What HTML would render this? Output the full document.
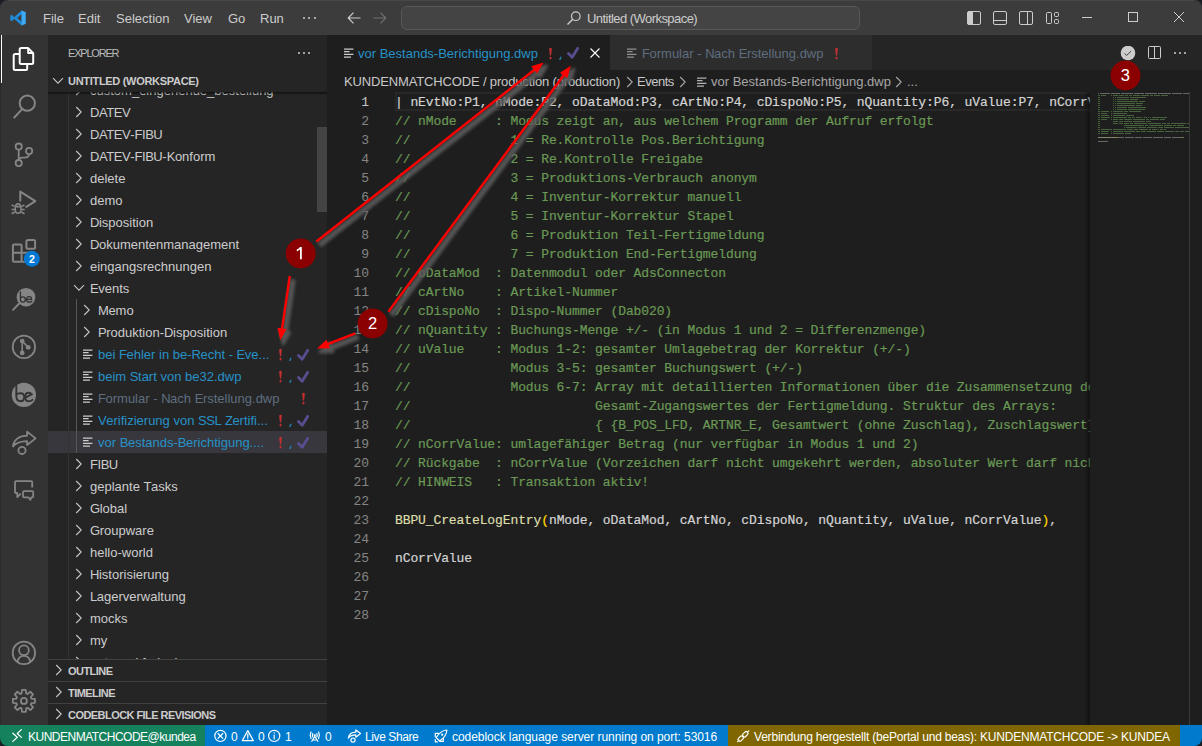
<!DOCTYPE html>
<html><head><meta charset="utf-8"><style>
*{box-sizing:border-box;margin:0;padding:0}
html,body{width:1202px;height:746px;overflow:hidden;background:#1e1e1e}
body{position:relative;font-family:"Liberation Sans",sans-serif;color:#cccccc}
.a{position:absolute}
#title{left:0;top:0;width:1202px;height:35px;background:#3c3c3c}
#act{left:0;top:35px;width:48px;height:690px;background:#333333}
#side{left:48px;top:35px;width:279px;height:690px;background:#252526;overflow:hidden}
#editor{left:327px;top:35px;width:875px;height:690px;background:#1e1e1e;overflow:hidden}
#status{left:0;top:725px;width:1202px;height:21px;background:#007acc;color:#fff;font-size:12px;overflow:hidden}
.menu{top:11px;font-size:13px;color:#cccccc;line-height:16px;white-space:nowrap}
.row{position:absolute;left:0;width:279px;height:22px;line-height:22px;font-size:13px;color:#cccccc;white-space:nowrap}
.t{position:absolute;top:1px}
.code{position:absolute;left:68px;height:19px;line-height:19px;font-family:"Liberation Mono",monospace;font-size:13px;letter-spacing:-0.105px;white-space:pre;color:#d4d4d4;-webkit-text-stroke:0.2px currentColor}
.ln{position:absolute;left:0;width:42px;text-align:right;height:19px;line-height:19px;font-family:"Liberation Mono",monospace;font-size:13px;letter-spacing:-0.105px;color:#858585}
.cm{color:#6a9955}
.fn{color:#dcdcaa}
.br{color:#ffd700}
.sh{position:absolute;left:0;width:279px;height:22px;border-top:1px solid #414141;font-size:11px;font-weight:bold;line-height:21px;color:#cccccc;letter-spacing:-0.55px}
.st{position:absolute;top:2px;height:21px;line-height:21px;white-space:nowrap}
</style></head><body>
<div id="title" class="a">
<svg class="a" style="left:10px;top:10px" width="16" height="16" viewBox="0 0 16 16">
<path d="M11.6 0.4 L15.6 2.3 V13.7 L11.6 15.6 L4.3 8.9 L1.3 11.2 L0.3 10.6 V5.4 L1.3 4.8 L4.3 7.1 Z M11.6 4.2 L7.2 8 L11.6 11.8 Z" fill="#2189d6"/>
<path d="M11.6 0.4 L15.6 2.3 V13.7 L11.6 15.6 Z" fill="#3fa9f5"/></svg>
<div class="a menu" style="left:43px">File</div>
<div class="a menu" style="left:78px">Edit</div>
<div class="a menu" style="left:116px">Selection</div>
<div class="a menu" style="left:184px">View</div>
<div class="a menu" style="left:228px">Go</div>
<div class="a menu" style="left:260px">Run</div>
<div class="a" style="left:303.0px;top:17px;width:2px;height:2px;border-radius:1px;background:#cccccc"></div>
<div class="a" style="left:308.3px;top:17px;width:2px;height:2px;border-radius:1px;background:#cccccc"></div>
<div class="a" style="left:313.6px;top:17px;width:2px;height:2px;border-radius:1px;background:#cccccc"></div>
<svg class="a" style="left:346px;top:11px" width="16" height="14" viewBox="0 0 16 14"><path d="M14.5 7 H2.2 M7.5 1.7 L2.2 7 L7.5 12.3" stroke="#cccccc" stroke-width="1.2" fill="none"/></svg>
<svg class="a" style="left:372px;top:11px" width="16" height="14" viewBox="0 0 16 14"><path d="M1.5 7 H13.8 M8.5 1.7 L13.8 7 L8.5 12.3" stroke="#6f6f6f" stroke-width="1.2" fill="none"/></svg>
<div class="a" style="left:401px;top:6px;width:459px;height:24px;border:1px solid #585858;border-radius:6px;background:#444444"></div>
<svg class="a" style="left:566px;top:10px" width="16" height="16" viewBox="0 0 16 16"><circle cx="9.8" cy="6.2" r="4.3" stroke="#cccccc" stroke-width="1.2" fill="none"/><path d="M6.8 9.2 L1.5 14.5" stroke="#cccccc" stroke-width="1.4"/></svg>
<div class="a menu" style="left:587px;top:11px;letter-spacing:-0.55px">Untitled (Workspace)</div>
<svg class="a" style="left:966px;top:10px" width="16" height="16" viewBox="0 0 16 16"><rect x="1.5" y="1.5" width="13" height="13" rx="1.5" stroke="#cccccc" fill="none"/><path d="M1.5 2.5 Q1.5 1.5 2.5 1.5 H7 V14.5 H2.5 Q1.5 14.5 1.5 13.5 Z" fill="#cccccc"/></svg>
<svg class="a" style="left:992px;top:10px" width="16" height="16" viewBox="0 0 16 16"><rect x="1.5" y="1.5" width="13" height="13" rx="1.5" stroke="#cccccc" fill="none"/><path d="M1.5 10.5 H14.5" stroke="#cccccc"/></svg>
<svg class="a" style="left:1018px;top:10px" width="16" height="16" viewBox="0 0 16 16"><rect x="1.5" y="1.5" width="13" height="13" rx="1.5" stroke="#cccccc" fill="none"/><path d="M9.5 1.5 V14.5" stroke="#cccccc"/></svg>
<svg class="a" style="left:1044px;top:10px" width="16" height="16" viewBox="0 0 16 16"><rect x="2.5" y="2.5" width="5" height="11" rx="1" stroke="#cccccc" fill="none"/><rect x="10.5" y="2.5" width="4" height="4" rx="1" stroke="#cccccc" fill="none"/><rect x="10.5" y="9.5" width="4" height="4" rx="1" stroke="#cccccc" fill="none"/></svg>
<div class="a" style="left:1082px;top:17px;width:10px;height:1px;background:#cccccc"></div>
<div class="a" style="left:1128px;top:12px;width:10px;height:10px;border:1px solid #cccccc"></div>
<svg class="a" style="left:1173px;top:11px" width="12" height="12" viewBox="0 0 12 12"><path d="M1 1 L11 11 M11 1 L1 11" stroke="#cccccc" stroke-width="1"/></svg>
</div>
<div id="act" class="a">
<div class="a" style="left:1px;top:0;width:1px;height:48px;background:#ffffff"></div><div class="a" style="left:0;top:0;width:1px;height:690px;background:#2a2a2a"></div>
</div>
<svg class="a" style="left:0;top:0" width="48" height="725" viewBox="0 0 48 725">
<g fill="none" stroke="#ffffff" stroke-width="2" stroke-linejoin="round">
<path d="M19.7 49.6 Q19.7 48.1 21.2 48.1 H28.2 L33.2 53.1 V62.4 Q33.2 63.9 31.7 63.9 H21.2 Q19.7 63.9 19.7 62.4 Z"/>
<path d="M28.2 48.1 V53.1 H33.2"/>
<path d="M19.7 54 H15.2 Q13.7 54 13.7 55.5 V68.5 Q13.7 70 15.2 70 H25.7 Q27.2 70 27.2 68.5 V63.9"/>
</g>
<g fill="none" stroke="#858585" stroke-width="2">
<circle cx="27.3" cy="103.2" r="7.6"/>
<path d="M14.3 117.5 L21.9 109.4" stroke-linecap="round"/>
</g>
<g fill="none" stroke="#858585" stroke-width="1.8">
<circle cx="18.7" cy="146.6" r="3.1"/><circle cx="18.7" cy="163.1" r="3.1"/><circle cx="29.1" cy="151" r="3.1"/>
<path d="M18.7 149.7 V160"/>
<path d="M29.1 154.1 C29.1 156.8 27 157.6 24.5 157.6 H22.5 C20.2 157.6 18.7 158.6 18.7 160.5"/>
</g>
<g fill="none" stroke="#858585" stroke-width="2" stroke-linejoin="round">
<path d="M20.3 201.4 V191.6 L35.3 201.2 L25.6 207.4"/>
</g>
<g fill="none" stroke="#858585" stroke-width="1.6">
<path d="M15.2 209 Q15.2 203.9 18.1 203.9 Q21.1 203.9 21.1 209 Q21.1 213.3 18.1 213.3 Q15.2 213.3 15.2 209 Z"/>
<path d="M15.2 206.6 H21.1 M11.7 205 L14.6 206.4 M24.5 205 L21.6 206.4 M11.5 209.5 H15 M21.2 209.5 H24.7 M11.7 213.8 L14.8 212 M24.5 213.8 L21.4 212"/>
</g>
<g fill="none" stroke="#858585" stroke-width="2" stroke-linejoin="round">
<rect x="12.9" y="244.4" width="8.7" height="17.3" rx="1.2"/>
<path d="M12.9 252.8 H21.6 M21.6 252.8 H30.5 V261.7 H21.6"/>
<rect x="26.4" y="240.1" width="8.7" height="8.6" rx="1.5"/>
</g>
<circle cx="31.8" cy="258.8" r="8" fill="#0078d4"/>
<text x="31.8" y="262.6" text-anchor="middle" font-family="Liberation Sans" font-weight="bold" font-size="10.5" fill="#ffffff">2</text>
<circle cx="26" cy="297.2" r="9.3" fill="#858585"/>
<path d="M13 309.8 L19.2 303.5" stroke="#858585" stroke-width="1.8" stroke-linecap="round"/>
<g fill="none" stroke="#333333" stroke-width="1.3" stroke-linecap="round">
<path d="M20.4 291.8 V299.6 Q20.4 302.2 22.9 302.2 Q25.3 302.2 25.3 299.6 Q25.3 296.9 22.9 296.9 Q21.4 296.9 20.6 298"/>
<path d="M26.6 299.4 H31.6 Q31.6 296.7 29.2 296.7 Q26.6 296.7 26.6 299.5 Q26.6 302.2 29.3 302.2 Q30.9 302.2 31.8 301.2"/>
</g>
<g fill="none" stroke="#858585" stroke-width="1.8">
<circle cx="23.9" cy="346.9" r="11.2"/>
<path d="M22.2 341.1 V352.9 M22.2 341.1 L28.2 347.3" stroke-width="1.6"/>
</g>
<g fill="#858585"><circle cx="22.2" cy="341.1" r="2.4"/><circle cx="22.2" cy="352.9" r="2.4"/><circle cx="28.2" cy="347.3" r="2.4"/></g>
<circle cx="23.9" cy="394.9" r="12.1" fill="#858585"/>
<g fill="none" stroke="#333333" stroke-width="1.9" stroke-linecap="round">
<path d="M16.3 385.2 V395.8 Q16.3 401.3 20.7 401.3 Q24.2 401.3 24.2 397.3 Q24.2 393.2 20.7 393.2 Q18.6 393.2 17.6 393.8"/>
<path d="M25.4 397.6 L31.8 394.3 Q30.6 392.8 28.6 392.8 Q25.2 392.8 25.2 397 Q25.2 401.3 28.8 401.3 Q31 401.3 32.4 399.8"/>
</g>
<g fill="none" stroke="#858585" stroke-width="1.8" stroke-linejoin="round" stroke-linecap="round">
<path d="M13 446.3 C13.8 439.5 19.5 435.8 27.1 435.6 V431.6 L35.6 438.4 L27.1 445 V441.2 C20.8 441.3 16 443.2 13 446.3 Z"/>
<circle cx="22" cy="450.4" r="3.6"/>
</g>
<g fill="none" stroke="#858585" stroke-width="1.8" stroke-linejoin="round">
<path d="M32.2 487.4 V482.2 Q32.2 481.2 31.2 481.2 H16 Q15 481.2 15 482.2 V492.2 Q15 493 16 493 H17.3 V497 L20.8 493.6"/>
<path d="M23 492.2 Q23 491.2 24 491.2 H32.2 Q33.2 491.2 33.2 492.2 V496.4 Q33.2 497.3 32.2 497.3 H31.3 L30.3 499.8 L28.3 497.3 H24 Q23 497.3 23 496.4 Z"/>
</g>
<g fill="none" stroke="#858585" stroke-width="1.8">
<circle cx="23.9" cy="652.9" r="11.2"/>
<circle cx="23.9" cy="650.3" r="4.9"/>
<path d="M17.4 661.8 Q18.6 655.8 23.9 655.8 Q29.2 655.8 30.4 661.8"/>
<path d="M31.35 698.59 L34.94 699.01 L34.94 702.79 L31.35 703.21 L30.80 704.54 L33.05 707.37 L30.37 710.05 L27.54 707.80 L26.21 708.35 L25.79 711.94 L22.01 711.94 L21.59 708.35 L20.26 707.80 L17.43 710.05 L14.75 707.37 L17.00 704.54 L16.45 703.21 L12.86 702.79 L12.86 699.01 L16.45 698.59 L17.00 697.26 L14.75 694.43 L17.43 691.75 L20.26 694.00 L21.59 693.45 L22.01 689.86 L25.79 689.86 L26.21 693.45 L27.54 694.00 L30.37 691.75 L33.05 694.43 L30.80 697.26 Z" stroke-linejoin="round"/>
<circle cx="23.9" cy="700.9" r="3"/>
</g>
</svg>
<div id="side" class="a">
<div class="row" style="top:44px;">
<svg class="a" style="left:27px;top:5px" width="8" height="12" viewBox="0 0 8 12"><path d="M1.2 1 L6.2 6 L1.2 11" stroke="#c5c5c5" stroke-width="1.1" fill="none"/></svg>
<div class="t" style="left:42px;color:#cccccc">custom_eingehende_bestellung</div>
</div>
<div class="row" style="top:66px;">
<svg class="a" style="left:27px;top:5px" width="8" height="12" viewBox="0 0 8 12"><path d="M1.2 1 L6.2 6 L1.2 11" stroke="#c5c5c5" stroke-width="1.1" fill="none"/></svg>
<div class="t" style="left:42px;color:#cccccc"><span style="letter-spacing:-0.45px">DATEV</span></div>
</div>
<div class="row" style="top:88px;">
<svg class="a" style="left:27px;top:5px" width="8" height="12" viewBox="0 0 8 12"><path d="M1.2 1 L6.2 6 L1.2 11" stroke="#c5c5c5" stroke-width="1.1" fill="none"/></svg>
<div class="t" style="left:42px;color:#cccccc"><span style="letter-spacing:-0.45px">DATEV</span>-<span style="letter-spacing:-0.45px">FIBU</span></div>
</div>
<div class="row" style="top:110px;">
<svg class="a" style="left:27px;top:5px" width="8" height="12" viewBox="0 0 8 12"><path d="M1.2 1 L6.2 6 L1.2 11" stroke="#c5c5c5" stroke-width="1.1" fill="none"/></svg>
<div class="t" style="left:42px;color:#cccccc"><span style="letter-spacing:-0.45px">DATEV</span>-<span style="letter-spacing:-0.45px">FIBU</span>-<span style="letter-spacing:-0.45px">K</span>onform</div>
</div>
<div class="row" style="top:132px;">
<svg class="a" style="left:27px;top:5px" width="8" height="12" viewBox="0 0 8 12"><path d="M1.2 1 L6.2 6 L1.2 11" stroke="#c5c5c5" stroke-width="1.1" fill="none"/></svg>
<div class="t" style="left:42px;color:#cccccc">delete</div>
</div>
<div class="row" style="top:154px;">
<svg class="a" style="left:27px;top:5px" width="8" height="12" viewBox="0 0 8 12"><path d="M1.2 1 L6.2 6 L1.2 11" stroke="#c5c5c5" stroke-width="1.1" fill="none"/></svg>
<div class="t" style="left:42px;color:#cccccc">demo</div>
</div>
<div class="row" style="top:176px;">
<svg class="a" style="left:27px;top:5px" width="8" height="12" viewBox="0 0 8 12"><path d="M1.2 1 L6.2 6 L1.2 11" stroke="#c5c5c5" stroke-width="1.1" fill="none"/></svg>
<div class="t" style="left:42px;color:#cccccc"><span style="letter-spacing:-0.45px">D</span>isposition</div>
</div>
<div class="row" style="top:198px;">
<svg class="a" style="left:27px;top:5px" width="8" height="12" viewBox="0 0 8 12"><path d="M1.2 1 L6.2 6 L1.2 11" stroke="#c5c5c5" stroke-width="1.1" fill="none"/></svg>
<div class="t" style="left:42px;color:#cccccc"><span style="letter-spacing:-0.45px">D</span>okumentenmanagement</div>
</div>
<div class="row" style="top:220px;">
<svg class="a" style="left:27px;top:5px" width="8" height="12" viewBox="0 0 8 12"><path d="M1.2 1 L6.2 6 L1.2 11" stroke="#c5c5c5" stroke-width="1.1" fill="none"/></svg>
<div class="t" style="left:42px;color:#cccccc">eingangsrechnungen</div>
</div>
<div class="row" style="top:242px;">
<svg class="a" style="left:25px;top:7px" width="12" height="8" viewBox="0 0 12 8"><path d="M1 1.2 L6 6.2 L11 1.2" stroke="#c5c5c5" stroke-width="1.1" fill="none"/></svg>
<div class="t" style="left:42px;color:#cccccc"><span style="letter-spacing:-0.45px">E</span>vents</div>
</div>
<div class="row" style="top:264px;">
<svg class="a" style="left:35px;top:5px" width="8" height="12" viewBox="0 0 8 12"><path d="M1.2 1 L6.2 6 L1.2 11" stroke="#c5c5c5" stroke-width="1.1" fill="none"/></svg>
<div class="t" style="left:50px;color:#cccccc"><span style="letter-spacing:-0.45px">M</span>emo</div>
</div>
<div class="row" style="top:286px;">
<svg class="a" style="left:35px;top:5px" width="8" height="12" viewBox="0 0 8 12"><path d="M1.2 1 L6.2 6 L1.2 11" stroke="#c5c5c5" stroke-width="1.1" fill="none"/></svg>
<div class="t" style="left:50px;color:#cccccc"><span style="letter-spacing:-0.45px">P</span>roduktion-<span style="letter-spacing:-0.45px">D</span>isposition</div>
</div>
<div class="row" style="top:308px;">
<svg class="a" style="left:35px;top:6px" width="10" height="10" viewBox="0 0 10 10"><path d="M0 1 H9.4 M0 3.7 H5.6 M0 6.3 H9.4 M0 9 H7" stroke="#cccccc" stroke-width="1.25"/></svg>
<div class="t" style="left:50px;color:#2792c6">bei <span style="letter-spacing:-0.45px">F</span>ehler in be-<span style="letter-spacing:-0.45px">R</span>echt - <span style="letter-spacing:-0.45px">E</span>ve...</div>
<svg class="a" style="left:230px;top:5px" width="5" height="14" viewBox="0 0 5 14"><path d="M1.2 2 Q1.2 0.8 2.5 0.8 Q3.8 0.8 3.8 2 L3.1 8.4 H1.9 Z" fill="#c62f2f"/><path d="M2.5 9.5 L3.8 11.1 L2.5 12.8 L1.2 11.1 Z" fill="#c62f2f"/></svg>
<svg class="a" style="left:241px;top:14px" width="3" height="5" viewBox="0 0 3 5"><path d="M1.2 0.8 H2.7 L1.5 4 H0.1 Z" fill="#2282a8"/></svg>
<svg class="a" style="left:248px;top:6px" width="14" height="13" viewBox="0 0 14 13"><path d="M2.5 6.5 L6.2 10.3 L11.6 1.4" stroke="#5a4d8f" stroke-width="2.8" fill="none" stroke-linecap="round" stroke-linejoin="round"/></svg>
</div>
<div class="row" style="top:330px;">
<svg class="a" style="left:35px;top:6px" width="10" height="10" viewBox="0 0 10 10"><path d="M0 1 H9.4 M0 3.7 H5.6 M0 6.3 H9.4 M0 9 H7" stroke="#cccccc" stroke-width="1.25"/></svg>
<div class="t" style="left:50px;color:#2792c6">beim <span style="letter-spacing:-0.45px">S</span>tart von be32.dwp</div>
<svg class="a" style="left:230px;top:5px" width="5" height="14" viewBox="0 0 5 14"><path d="M1.2 2 Q1.2 0.8 2.5 0.8 Q3.8 0.8 3.8 2 L3.1 8.4 H1.9 Z" fill="#c62f2f"/><path d="M2.5 9.5 L3.8 11.1 L2.5 12.8 L1.2 11.1 Z" fill="#c62f2f"/></svg>
<svg class="a" style="left:241px;top:14px" width="3" height="5" viewBox="0 0 3 5"><path d="M1.2 0.8 H2.7 L1.5 4 H0.1 Z" fill="#2282a8"/></svg>
<svg class="a" style="left:248px;top:6px" width="14" height="13" viewBox="0 0 14 13"><path d="M2.5 6.5 L6.2 10.3 L11.6 1.4" stroke="#5a4d8f" stroke-width="2.8" fill="none" stroke-linecap="round" stroke-linejoin="round"/></svg>
</div>
<div class="row" style="top:352px;">
<svg class="a" style="left:35px;top:6px" width="10" height="10" viewBox="0 0 10 10"><path d="M0 1 H9.4 M0 3.7 H5.6 M0 6.3 H9.4 M0 9 H7" stroke="#cccccc" stroke-width="1.25"/></svg>
<div class="t" style="left:50px;color:#5f6e7f"><span style="letter-spacing:-0.45px">F</span>ormular - <span style="letter-spacing:-0.45px">N</span>ach <span style="letter-spacing:-0.45px">E</span>rstellung.dwp</div>
<svg class="a" style="left:253px;top:5px" width="5" height="14" viewBox="0 0 5 14"><path d="M1.2 2 Q1.2 0.8 2.5 0.8 Q3.8 0.8 3.8 2 L3.1 8.4 H1.9 Z" fill="#c62f2f"/><path d="M2.5 9.5 L3.8 11.1 L2.5 12.8 L1.2 11.1 Z" fill="#c62f2f"/></svg>
</div>
<div class="row" style="top:374px;">
<svg class="a" style="left:35px;top:6px" width="10" height="10" viewBox="0 0 10 10"><path d="M0 1 H9.4 M0 3.7 H5.6 M0 6.3 H9.4 M0 9 H7" stroke="#cccccc" stroke-width="1.25"/></svg>
<div class="t" style="left:50px;color:#2792c6"><span style="letter-spacing:-0.45px">V</span>erifizierung von <span style="letter-spacing:-0.45px">SSL</span> <span style="letter-spacing:-0.45px">Z</span>ertifi...</div>
<svg class="a" style="left:230px;top:5px" width="5" height="14" viewBox="0 0 5 14"><path d="M1.2 2 Q1.2 0.8 2.5 0.8 Q3.8 0.8 3.8 2 L3.1 8.4 H1.9 Z" fill="#c62f2f"/><path d="M2.5 9.5 L3.8 11.1 L2.5 12.8 L1.2 11.1 Z" fill="#c62f2f"/></svg>
<svg class="a" style="left:241px;top:14px" width="3" height="5" viewBox="0 0 3 5"><path d="M1.2 0.8 H2.7 L1.5 4 H0.1 Z" fill="#2282a8"/></svg>
<svg class="a" style="left:248px;top:6px" width="14" height="13" viewBox="0 0 14 13"><path d="M2.5 6.5 L6.2 10.3 L11.6 1.4" stroke="#5a4d8f" stroke-width="2.8" fill="none" stroke-linecap="round" stroke-linejoin="round"/></svg>
</div>
<div class="row" style="top:396px;background:#37373d;">
<svg class="a" style="left:35px;top:6px" width="10" height="10" viewBox="0 0 10 10"><path d="M0 1 H9.4 M0 3.7 H5.6 M0 6.3 H9.4 M0 9 H7" stroke="#cccccc" stroke-width="1.25"/></svg>
<div class="t" style="left:50px;color:#2792c6">vor <span style="letter-spacing:-0.45px">B</span>estands-<span style="letter-spacing:-0.45px">B</span>erichtigung....</div>
<svg class="a" style="left:230px;top:5px" width="5" height="14" viewBox="0 0 5 14"><path d="M1.2 2 Q1.2 0.8 2.5 0.8 Q3.8 0.8 3.8 2 L3.1 8.4 H1.9 Z" fill="#c62f2f"/><path d="M2.5 9.5 L3.8 11.1 L2.5 12.8 L1.2 11.1 Z" fill="#c62f2f"/></svg>
<svg class="a" style="left:241px;top:14px" width="3" height="5" viewBox="0 0 3 5"><path d="M1.2 0.8 H2.7 L1.5 4 H0.1 Z" fill="#2282a8"/></svg>
<svg class="a" style="left:248px;top:6px" width="14" height="13" viewBox="0 0 14 13"><path d="M2.5 6.5 L6.2 10.3 L11.6 1.4" stroke="#5a4d8f" stroke-width="2.8" fill="none" stroke-linecap="round" stroke-linejoin="round"/></svg>
</div>
<div class="row" style="top:418px;">
<svg class="a" style="left:27px;top:5px" width="8" height="12" viewBox="0 0 8 12"><path d="M1.2 1 L6.2 6 L1.2 11" stroke="#c5c5c5" stroke-width="1.1" fill="none"/></svg>
<div class="t" style="left:42px;color:#cccccc"><span style="letter-spacing:-0.45px">FIBU</span></div>
</div>
<div class="row" style="top:440px;">
<svg class="a" style="left:27px;top:5px" width="8" height="12" viewBox="0 0 8 12"><path d="M1.2 1 L6.2 6 L1.2 11" stroke="#c5c5c5" stroke-width="1.1" fill="none"/></svg>
<div class="t" style="left:42px;color:#cccccc">geplante <span style="letter-spacing:-0.45px">T</span>asks</div>
</div>
<div class="row" style="top:462px;">
<svg class="a" style="left:27px;top:5px" width="8" height="12" viewBox="0 0 8 12"><path d="M1.2 1 L6.2 6 L1.2 11" stroke="#c5c5c5" stroke-width="1.1" fill="none"/></svg>
<div class="t" style="left:42px;color:#cccccc"><span style="letter-spacing:-0.45px">G</span>lobal</div>
</div>
<div class="row" style="top:484px;">
<svg class="a" style="left:27px;top:5px" width="8" height="12" viewBox="0 0 8 12"><path d="M1.2 1 L6.2 6 L1.2 11" stroke="#c5c5c5" stroke-width="1.1" fill="none"/></svg>
<div class="t" style="left:42px;color:#cccccc"><span style="letter-spacing:-0.45px">G</span>roupware</div>
</div>
<div class="row" style="top:506px;">
<svg class="a" style="left:27px;top:5px" width="8" height="12" viewBox="0 0 8 12"><path d="M1.2 1 L6.2 6 L1.2 11" stroke="#c5c5c5" stroke-width="1.1" fill="none"/></svg>
<div class="t" style="left:42px;color:#cccccc">hello-world</div>
</div>
<div class="row" style="top:528px;">
<svg class="a" style="left:27px;top:5px" width="8" height="12" viewBox="0 0 8 12"><path d="M1.2 1 L6.2 6 L1.2 11" stroke="#c5c5c5" stroke-width="1.1" fill="none"/></svg>
<div class="t" style="left:42px;color:#cccccc"><span style="letter-spacing:-0.45px">H</span>istorisierung</div>
</div>
<div class="row" style="top:550px;">
<svg class="a" style="left:27px;top:5px" width="8" height="12" viewBox="0 0 8 12"><path d="M1.2 1 L6.2 6 L1.2 11" stroke="#c5c5c5" stroke-width="1.1" fill="none"/></svg>
<div class="t" style="left:42px;color:#cccccc"><span style="letter-spacing:-0.45px">L</span>agerverwaltung</div>
</div>
<div class="row" style="top:572px;">
<svg class="a" style="left:27px;top:5px" width="8" height="12" viewBox="0 0 8 12"><path d="M1.2 1 L6.2 6 L1.2 11" stroke="#c5c5c5" stroke-width="1.1" fill="none"/></svg>
<div class="t" style="left:42px;color:#cccccc">mocks</div>
</div>
<div class="row" style="top:594px;">
<svg class="a" style="left:27px;top:5px" width="8" height="12" viewBox="0 0 8 12"><path d="M1.2 1 L6.2 6 L1.2 11" stroke="#c5c5c5" stroke-width="1.1" fill="none"/></svg>
<div class="t" style="left:42px;color:#cccccc">my</div>
</div>
<div class="row" style="top:616px;">
<svg class="a" style="left:27px;top:5px" width="8" height="12" viewBox="0 0 8 12"><path d="M1.2 1 L6.2 6 L1.2 11" stroke="#c5c5c5" stroke-width="1.1" fill="none"/></svg>
<div class="t" style="left:42px;color:#cccccc">netzwerkfreigabe</div>
</div>
<div class="a" style="left:20px;top:57px;width:1px;height:640px;background:#333334"></div>
<div class="a" style="left:28px;top:264px;width:1px;height:154px;background:#585858"></div>
<div class="a" style="left:0;top:35px;width:279px;height:22px;background:#252526"></div><div class="a" style="left:0;top:57px;width:279px;height:3px;background:linear-gradient(rgba(0,0,0,0.6),rgba(0,0,0,0))"></div>
<svg class="a" style="left:4px;top:42px" width="12" height="8" viewBox="0 0 12 8"><path d="M1 1.2 L6 6.2 L11 1.2" stroke="#c5c5c5" stroke-width="1.1" fill="none"/></svg>
<div class="a" style="left:20px;top:35px;height:22px;line-height:22px;font-size:11px;font-weight:bold;color:#cccccc;letter-spacing:-0.3px">UNTITLED (WORKSPACE)</div>
<div class="a" style="left:20px;top:12px;font-size:11px;color:#bbbbbb;line-height:13px;letter-spacing:-1.2px">EXPLORER</div>
<div class="a" style="left:250.0px;top:17px;width:2px;height:2px;border-radius:1px;background:#cccccc"></div>
<div class="a" style="left:255.0px;top:17px;width:2px;height:2px;border-radius:1px;background:#cccccc"></div>
<div class="a" style="left:260.0px;top:17px;width:2px;height:2px;border-radius:1px;background:#cccccc"></div>
<div class="a" style="left:269px;top:92px;width:10px;height:85px;background:#4a4a4a;opacity:0.85"></div>
<div class="sh" style="top:624px;background:#252526">
<svg class="a" style="left:7px;top:4px" width="8" height="12" viewBox="0 0 8 12"><path d="M1.2 1 L6.2 6 L1.2 11" stroke="#c5c5c5" stroke-width="1.1" fill="none"/></svg>
<div class="t" style="left:20px">OUTLINE</div></div>
<div class="sh" style="top:646px;background:#252526">
<svg class="a" style="left:7px;top:4px" width="8" height="12" viewBox="0 0 8 12"><path d="M1.2 1 L6.2 6 L1.2 11" stroke="#c5c5c5" stroke-width="1.1" fill="none"/></svg>
<div class="t" style="left:20px">TIMELINE</div></div>
<div class="sh" style="top:668px;background:#252526">
<svg class="a" style="left:7px;top:4px" width="8" height="12" viewBox="0 0 8 12"><path d="M1.2 1 L6.2 6 L1.2 11" stroke="#c5c5c5" stroke-width="1.1" fill="none"/></svg>
<div class="t" style="left:20px">CODEBLOCK FILE REVISIONS</div></div>
</div>
<div id="editor" class="a">
<div class="a" style="left:0;top:0;width:875px;height:35px;background:#252526"></div>
<div class="a" style="left:0;top:0;width:283px;height:35px;background:#1e1e1e"></div>
<div class="a" style="left:283px;top:0;width:262px;height:35px;background:#2d2d2d"></div>
<svg class="a" style="left:17px;top:13px" width="10" height="10" viewBox="0 0 10 10"><path d="M0 1 H9.4 M0 3.7 H5.6 M0 6.3 H9.4 M0 9 H7" stroke="#cccccc" stroke-width="1.25"/></svg>
<div class="a" style="left:31px;top:11px;font-size:13px;line-height:16px;color:#2792c6;white-space:nowrap">vor Bestands-Berichtigung.dwp</div>
<svg class="a" style="left:221px;top:12px" width="5" height="14" viewBox="0 0 5 14"><path d="M1.2 2 Q1.2 0.8 2.5 0.8 Q3.8 0.8 3.8 2 L3.1 8.4 H1.9 Z" fill="#c62f2f"/><path d="M2.5 9.5 L3.8 11.1 L2.5 12.8 L1.2 11.1 Z" fill="#c62f2f"/></svg>
<svg class="a" style="left:232px;top:21px" width="3" height="5" viewBox="0 0 3 5"><path d="M1.2 0.8 H2.7 L1.5 4 H0.1 Z" fill="#2282a8"/></svg>
<svg class="a" style="left:239px;top:12px" width="14" height="13" viewBox="0 0 14 13"><path d="M2.5 6.5 L6.2 10.3 L11.6 1.4" stroke="#5a4d8f" stroke-width="2.8" fill="none" stroke-linecap="round" stroke-linejoin="round"/></svg>
<svg class="a" style="left:263px;top:13px" width="10" height="10" viewBox="0 0 10 10"><path d="M0.5 0.5 L9.5 9.5 M9.5 0.5 L0.5 9.5" stroke="#ffffff" stroke-width="1.1"/></svg>
<svg class="a" style="left:300px;top:13px" width="10" height="10" viewBox="0 0 10 10"><path d="M0 1 H9.4 M0 3.7 H5.6 M0 6.3 H9.4 M0 9 H7" stroke="#8f8f8f" stroke-width="1.25"/></svg>
<div class="a" style="left:315px;top:11px;font-size:13px;line-height:16px;color:#5f6e7f;white-space:nowrap"><span style="letter-spacing:-0.45px">F</span>ormular - <span style="letter-spacing:-0.45px">N</span>ach <span style="letter-spacing:-0.45px">E</span>rstellung.dwp</div>
<svg class="a" style="left:507px;top:12px" width="5" height="14" viewBox="0 0 5 14"><path d="M1.2 2 Q1.2 0.8 2.5 0.8 Q3.8 0.8 3.8 2 L3.1 8.4 H1.9 Z" fill="#c62f2f"/><path d="M2.5 9.5 L3.8 11.1 L2.5 12.8 L1.2 11.1 Z" fill="#c62f2f"/></svg>
<svg class="a" style="left:793px;top:11px" width="16" height="16" viewBox="0 0 16 16"><circle cx="8" cy="7" r="7.3" fill="#cccccc"/><path d="M4.6 7.3 L6.6 9.5 L11.1 5.1" stroke="#444" stroke-width="1" fill="none"/></svg>
<svg class="a" style="left:819px;top:11px" width="16" height="16" viewBox="0 0 16 16"><rect x="2.5" y="0.5" width="12" height="12" rx="1" stroke="#cccccc" fill="none"/><path d="M8.5 0.5 V12.5" stroke="#cccccc"/></svg>
<div class="a" style="left:847.0px;top:17px;width:2px;height:2px;border-radius:1px;background:#cccccc"></div>
<div class="a" style="left:852.0px;top:17px;width:2px;height:2px;border-radius:1px;background:#cccccc"></div>
<div class="a" style="left:857.0px;top:17px;width:2px;height:2px;border-radius:1px;background:#cccccc"></div>
<div class="a" style="left:17px;top:39px;font-size:13px;line-height:16px;color:#c8c8c8;white-space:nowrap;letter-spacing:-0.15px">KUNDENMATCHCODE / production (production)</div>
<svg class="a" style="left:299px;top:41px" width="8" height="12" viewBox="0 0 8 12"><path d="M1.2 1 L6.2 6 L1.2 11" stroke="#a6a6a6" stroke-width="1.1" fill="none"/></svg>
<div class="a" style="left:310px;top:39px;font-size:13px;line-height:16px;color:#c8c8c8;white-space:nowrap;letter-spacing:-0.5px">Events</div>
<svg class="a" style="left:352px;top:41px" width="8" height="12" viewBox="0 0 8 12"><path d="M1.2 1 L6.2 6 L1.2 11" stroke="#a6a6a6" stroke-width="1.1" fill="none"/></svg>
<svg class="a" style="left:370px;top:42px" width="10" height="10" viewBox="0 0 10 10"><path d="M0 1 H9.4 M0 3.7 H5.6 M0 6.3 H9.4 M0 9 H7" stroke="#b0b0b0" stroke-width="1.25"/></svg>
<div class="a" style="left:384px;top:39px;font-size:13px;line-height:16px;color:#a6a6a6;white-space:nowrap">vor Bestands-Berichtigung.dwp</div>
<svg class="a" style="left:568px;top:41px" width="8" height="12" viewBox="0 0 8 12"><path d="M1.2 1 L6.2 6 L1.2 11" stroke="#a6a6a6" stroke-width="1.1" fill="none"/></svg>
<div class="a" style="left:580px;top:39px;font-size:13px;line-height:16px;color:#a6a6a6;white-space:nowrap">...</div>
<div class="a" style="left:68px;top:57px;width:695px;height:19px;border:2px solid #282828;border-right:none"></div>
<div class="a" style="left:0;top:57px;width:763px;height:633px;overflow:hidden">
<div class="ln" style="top:1px;color:#c6c6c6">1</div>
<div class="code" style="top:1px">| nEvtNo:P1, nMode:P2, oDataMod:P3, cArtNo:P4, cDispoNo:P5, nQuantity:P6, uValue:P7, nCorrValue:P8 |</div>
<div class="ln" style="top:20px;color:#858585">2</div>
<div class="code" style="top:20px"><span class="cm">// nMode     : Modus zeigt an, aus welchem Programm der Aufruf erfolgt</span></div>
<div class="ln" style="top:39px;color:#858585">3</div>
<div class="code" style="top:39px"><span class="cm">//             1 = Re.Kontrolle Pos.Berichtigung</span></div>
<div class="ln" style="top:58px;color:#858585">4</div>
<div class="code" style="top:58px"><span class="cm">//             2 = Re.Kontrolle Freigabe</span></div>
<div class="ln" style="top:77px;color:#858585">5</div>
<div class="code" style="top:77px"><span class="cm">//             3 = Produktions-Verbrauch anonym</span></div>
<div class="ln" style="top:96px;color:#858585">6</div>
<div class="code" style="top:96px"><span class="cm">//             4 = Inventur-Korrektur manuell</span></div>
<div class="ln" style="top:115px;color:#858585">7</div>
<div class="code" style="top:115px"><span class="cm">//             5 = Inventur-Korrektur Stapel</span></div>
<div class="ln" style="top:134px;color:#858585">8</div>
<div class="code" style="top:134px"><span class="cm">//             6 = Produktion Teil-Fertigmeldung</span></div>
<div class="ln" style="top:153px;color:#858585">9</div>
<div class="code" style="top:153px"><span class="cm">//             7 = Produktion End-Fertigmeldung</span></div>
<div class="ln" style="top:172px;color:#858585">10</div>
<div class="code" style="top:172px"><span class="cm">// oDataMod  : Datenmodul oder AdsConnecton</span></div>
<div class="ln" style="top:191px;color:#858585">11</div>
<div class="code" style="top:191px"><span class="cm">// cArtNo    : Artikel-Nummer</span></div>
<div class="ln" style="top:210px;color:#858585">12</div>
<div class="code" style="top:210px"><span class="cm">// cDispoNo  : Dispo-Nummer (Dab020)</span></div>
<div class="ln" style="top:229px;color:#858585">13</div>
<div class="code" style="top:229px"><span class="cm">// nQuantity : Buchungs-Menge +/- (in Modus 1 und 2 = Differenzmenge)</span></div>
<div class="ln" style="top:248px;color:#858585">14</div>
<div class="code" style="top:248px"><span class="cm">// uValue    : Modus 1-2: gesamter Umlagebetrag der Korrektur (+/-)</span></div>
<div class="ln" style="top:267px;color:#858585">15</div>
<div class="code" style="top:267px"><span class="cm">//             Modus 3-5: gesamter Buchungswert (+/-)</span></div>
<div class="ln" style="top:286px;color:#858585">16</div>
<div class="code" style="top:286px"><span class="cm">//             Modus 6-7: Array mit detaillierten Informationen über die Zusammensetzung des</span></div>
<div class="ln" style="top:305px;color:#858585">17</div>
<div class="code" style="top:305px"><span class="cm">//                        Gesamt-Zugangswertes der Fertigmeldung. Struktur des Arrays:</span></div>
<div class="ln" style="top:324px;color:#858585">18</div>
<div class="code" style="top:324px"><span class="cm">//                        { {B_POS_LFD, ARTNR_E, Gesamtwert (ohne Zuschlag), Zuschlagswert}, ...}</span></div>
<div class="ln" style="top:343px;color:#858585">19</div>
<div class="code" style="top:343px"><span class="cm">// nCorrValue: umlagefähiger Betrag (nur verfügbar in Modus 1 und 2)</span></div>
<div class="ln" style="top:362px;color:#858585">20</div>
<div class="code" style="top:362px"><span class="cm">// Rückgabe  : nCorrValue (Vorzeichen darf nicht umgekehrt werden, absoluter Wert darf nicht verändert werden)</span></div>
<div class="ln" style="top:381px;color:#858585">21</div>
<div class="code" style="top:381px"><span class="cm">// HINWEIS   : Transaktion aktiv!</span></div>
<div class="ln" style="top:400px;color:#858585">22</div>
<div class="ln" style="top:419px;color:#858585">23</div>
<div class="code" style="top:419px"><span class="fn">BBPU_CreateLogEntry</span><span class="br">(</span>nMode, oDataMod, cArtNo, cDispoNo, nQuantity, uValue, nCorrValue<span class="br">)</span>,</div>
<div class="ln" style="top:438px;color:#858585">24</div>
<div class="ln" style="top:457px;color:#858585">25</div>
<div class="code" style="top:457px">nCorrValue</div>
<div class="ln" style="top:476px;color:#858585">26</div>
<div class="ln" style="top:495px;color:#858585">27</div>
<div class="ln" style="top:514px;color:#858585">28</div>
</div>
<div class="a" style="left:757px;top:57px;width:6px;height:633px;background:linear-gradient(to right,rgba(0,0,0,0),rgba(0,0,0,0.4))"></div>
<div class="a" style="left:862px;top:57px;width:1px;height:633px;background:#3a3a3a"></div>
<div class="a" style="left:771px;top:58px;width:1px;height:1px;background:#d4d4d4;opacity:0.4"></div>
<div class="a" style="left:773px;top:58px;width:10px;height:1px;background:#d4d4d4;opacity:0.4"></div>
<div class="a" style="left:784px;top:58px;width:9px;height:1px;background:#d4d4d4;opacity:0.4"></div>
<div class="a" style="left:794px;top:58px;width:12px;height:1px;background:#d4d4d4;opacity:0.4"></div>
<div class="a" style="left:807px;top:58px;width:10px;height:1px;background:#d4d4d4;opacity:0.4"></div>
<div class="a" style="left:818px;top:58px;width:12px;height:1px;background:#d4d4d4;opacity:0.4"></div>
<div class="a" style="left:831px;top:58px;width:13px;height:1px;background:#d4d4d4;opacity:0.4"></div>
<div class="a" style="left:845px;top:58px;width:10px;height:1px;background:#d4d4d4;opacity:0.4"></div>
<div class="a" style="left:856px;top:58px;width:6px;height:1px;background:#d4d4d4;opacity:0.4"></div>
<div class="a" style="left:771px;top:60px;width:2px;height:1px;background:#6a9955;opacity:0.55"></div>
<div class="a" style="left:774px;top:60px;width:5px;height:1px;background:#6a9955;opacity:0.55"></div>
<div class="a" style="left:784px;top:60px;width:1px;height:1px;background:#6a9955;opacity:0.55"></div>
<div class="a" style="left:786px;top:60px;width:5px;height:1px;background:#6a9955;opacity:0.55"></div>
<div class="a" style="left:792px;top:60px;width:5px;height:1px;background:#6a9955;opacity:0.55"></div>
<div class="a" style="left:798px;top:60px;width:3px;height:1px;background:#6a9955;opacity:0.55"></div>
<div class="a" style="left:802px;top:60px;width:3px;height:1px;background:#6a9955;opacity:0.55"></div>
<div class="a" style="left:806px;top:60px;width:7px;height:1px;background:#6a9955;opacity:0.55"></div>
<div class="a" style="left:814px;top:60px;width:8px;height:1px;background:#6a9955;opacity:0.55"></div>
<div class="a" style="left:823px;top:60px;width:3px;height:1px;background:#6a9955;opacity:0.55"></div>
<div class="a" style="left:827px;top:60px;width:6px;height:1px;background:#6a9955;opacity:0.55"></div>
<div class="a" style="left:834px;top:60px;width:7px;height:1px;background:#6a9955;opacity:0.55"></div>
<div class="a" style="left:771px;top:62px;width:2px;height:1px;background:#6a9955;opacity:0.55"></div>
<div class="a" style="left:786px;top:62px;width:1px;height:1px;background:#6a9955;opacity:0.55"></div>
<div class="a" style="left:788px;top:62px;width:1px;height:1px;background:#6a9955;opacity:0.55"></div>
<div class="a" style="left:790px;top:62px;width:12px;height:1px;background:#6a9955;opacity:0.55"></div>
<div class="a" style="left:803px;top:62px;width:16px;height:1px;background:#6a9955;opacity:0.55"></div>
<div class="a" style="left:771px;top:64px;width:2px;height:1px;background:#6a9955;opacity:0.55"></div>
<div class="a" style="left:786px;top:64px;width:1px;height:1px;background:#6a9955;opacity:0.55"></div>
<div class="a" style="left:788px;top:64px;width:1px;height:1px;background:#6a9955;opacity:0.55"></div>
<div class="a" style="left:790px;top:64px;width:12px;height:1px;background:#6a9955;opacity:0.55"></div>
<div class="a" style="left:803px;top:64px;width:8px;height:1px;background:#6a9955;opacity:0.55"></div>
<div class="a" style="left:771px;top:66px;width:2px;height:1px;background:#6a9955;opacity:0.55"></div>
<div class="a" style="left:786px;top:66px;width:1px;height:1px;background:#6a9955;opacity:0.55"></div>
<div class="a" style="left:788px;top:66px;width:1px;height:1px;background:#6a9955;opacity:0.55"></div>
<div class="a" style="left:790px;top:66px;width:21px;height:1px;background:#6a9955;opacity:0.55"></div>
<div class="a" style="left:812px;top:66px;width:6px;height:1px;background:#6a9955;opacity:0.55"></div>
<div class="a" style="left:771px;top:68px;width:2px;height:1px;background:#6a9955;opacity:0.55"></div>
<div class="a" style="left:786px;top:68px;width:1px;height:1px;background:#6a9955;opacity:0.55"></div>
<div class="a" style="left:788px;top:68px;width:1px;height:1px;background:#6a9955;opacity:0.55"></div>
<div class="a" style="left:790px;top:68px;width:18px;height:1px;background:#6a9955;opacity:0.55"></div>
<div class="a" style="left:809px;top:68px;width:7px;height:1px;background:#6a9955;opacity:0.55"></div>
<div class="a" style="left:771px;top:70px;width:2px;height:1px;background:#6a9955;opacity:0.55"></div>
<div class="a" style="left:786px;top:70px;width:1px;height:1px;background:#6a9955;opacity:0.55"></div>
<div class="a" style="left:788px;top:70px;width:1px;height:1px;background:#6a9955;opacity:0.55"></div>
<div class="a" style="left:790px;top:70px;width:18px;height:1px;background:#6a9955;opacity:0.55"></div>
<div class="a" style="left:809px;top:70px;width:6px;height:1px;background:#6a9955;opacity:0.55"></div>
<div class="a" style="left:771px;top:72px;width:2px;height:1px;background:#6a9955;opacity:0.55"></div>
<div class="a" style="left:786px;top:72px;width:1px;height:1px;background:#6a9955;opacity:0.55"></div>
<div class="a" style="left:788px;top:72px;width:1px;height:1px;background:#6a9955;opacity:0.55"></div>
<div class="a" style="left:790px;top:72px;width:10px;height:1px;background:#6a9955;opacity:0.55"></div>
<div class="a" style="left:801px;top:72px;width:18px;height:1px;background:#6a9955;opacity:0.55"></div>
<div class="a" style="left:771px;top:74px;width:2px;height:1px;background:#6a9955;opacity:0.55"></div>
<div class="a" style="left:786px;top:74px;width:1px;height:1px;background:#6a9955;opacity:0.55"></div>
<div class="a" style="left:788px;top:74px;width:1px;height:1px;background:#6a9955;opacity:0.55"></div>
<div class="a" style="left:790px;top:74px;width:10px;height:1px;background:#6a9955;opacity:0.55"></div>
<div class="a" style="left:801px;top:74px;width:17px;height:1px;background:#6a9955;opacity:0.55"></div>
<div class="a" style="left:771px;top:76px;width:2px;height:1px;background:#6a9955;opacity:0.55"></div>
<div class="a" style="left:774px;top:76px;width:8px;height:1px;background:#6a9955;opacity:0.55"></div>
<div class="a" style="left:784px;top:76px;width:1px;height:1px;background:#6a9955;opacity:0.55"></div>
<div class="a" style="left:786px;top:76px;width:10px;height:1px;background:#6a9955;opacity:0.55"></div>
<div class="a" style="left:797px;top:76px;width:4px;height:1px;background:#6a9955;opacity:0.55"></div>
<div class="a" style="left:802px;top:76px;width:12px;height:1px;background:#6a9955;opacity:0.55"></div>
<div class="a" style="left:771px;top:78px;width:2px;height:1px;background:#6a9955;opacity:0.55"></div>
<div class="a" style="left:774px;top:78px;width:6px;height:1px;background:#6a9955;opacity:0.55"></div>
<div class="a" style="left:784px;top:78px;width:1px;height:1px;background:#6a9955;opacity:0.55"></div>
<div class="a" style="left:786px;top:78px;width:14px;height:1px;background:#6a9955;opacity:0.55"></div>
<div class="a" style="left:771px;top:80px;width:2px;height:1px;background:#6a9955;opacity:0.55"></div>
<div class="a" style="left:774px;top:80px;width:8px;height:1px;background:#6a9955;opacity:0.55"></div>
<div class="a" style="left:784px;top:80px;width:1px;height:1px;background:#6a9955;opacity:0.55"></div>
<div class="a" style="left:786px;top:80px;width:12px;height:1px;background:#6a9955;opacity:0.55"></div>
<div class="a" style="left:799px;top:80px;width:8px;height:1px;background:#6a9955;opacity:0.55"></div>
<div class="a" style="left:771px;top:82px;width:2px;height:1px;background:#6a9955;opacity:0.55"></div>
<div class="a" style="left:774px;top:82px;width:9px;height:1px;background:#6a9955;opacity:0.55"></div>
<div class="a" style="left:784px;top:82px;width:1px;height:1px;background:#6a9955;opacity:0.55"></div>
<div class="a" style="left:786px;top:82px;width:14px;height:1px;background:#6a9955;opacity:0.55"></div>
<div class="a" style="left:801px;top:82px;width:3px;height:1px;background:#6a9955;opacity:0.55"></div>
<div class="a" style="left:805px;top:82px;width:3px;height:1px;background:#6a9955;opacity:0.55"></div>
<div class="a" style="left:809px;top:82px;width:5px;height:1px;background:#6a9955;opacity:0.55"></div>
<div class="a" style="left:815px;top:82px;width:1px;height:1px;background:#6a9955;opacity:0.55"></div>
<div class="a" style="left:817px;top:82px;width:3px;height:1px;background:#6a9955;opacity:0.55"></div>
<div class="a" style="left:821px;top:82px;width:1px;height:1px;background:#6a9955;opacity:0.55"></div>
<div class="a" style="left:823px;top:82px;width:1px;height:1px;background:#6a9955;opacity:0.55"></div>
<div class="a" style="left:825px;top:82px;width:15px;height:1px;background:#6a9955;opacity:0.55"></div>
<div class="a" style="left:771px;top:84px;width:2px;height:1px;background:#6a9955;opacity:0.55"></div>
<div class="a" style="left:774px;top:84px;width:6px;height:1px;background:#6a9955;opacity:0.55"></div>
<div class="a" style="left:784px;top:84px;width:1px;height:1px;background:#6a9955;opacity:0.55"></div>
<div class="a" style="left:786px;top:84px;width:5px;height:1px;background:#6a9955;opacity:0.55"></div>
<div class="a" style="left:792px;top:84px;width:4px;height:1px;background:#6a9955;opacity:0.55"></div>
<div class="a" style="left:797px;top:84px;width:8px;height:1px;background:#6a9955;opacity:0.55"></div>
<div class="a" style="left:806px;top:84px;width:12px;height:1px;background:#6a9955;opacity:0.55"></div>
<div class="a" style="left:819px;top:84px;width:3px;height:1px;background:#6a9955;opacity:0.55"></div>
<div class="a" style="left:823px;top:84px;width:9px;height:1px;background:#6a9955;opacity:0.55"></div>
<div class="a" style="left:833px;top:84px;width:5px;height:1px;background:#6a9955;opacity:0.55"></div>
<div class="a" style="left:771px;top:86px;width:2px;height:1px;background:#6a9955;opacity:0.55"></div>
<div class="a" style="left:786px;top:86px;width:5px;height:1px;background:#6a9955;opacity:0.55"></div>
<div class="a" style="left:792px;top:86px;width:4px;height:1px;background:#6a9955;opacity:0.55"></div>
<div class="a" style="left:797px;top:86px;width:8px;height:1px;background:#6a9955;opacity:0.55"></div>
<div class="a" style="left:806px;top:86px;width:12px;height:1px;background:#6a9955;opacity:0.55"></div>
<div class="a" style="left:819px;top:86px;width:5px;height:1px;background:#6a9955;opacity:0.55"></div>
<div class="a" style="left:771px;top:88px;width:2px;height:1px;background:#6a9955;opacity:0.55"></div>
<div class="a" style="left:786px;top:88px;width:5px;height:1px;background:#6a9955;opacity:0.55"></div>
<div class="a" style="left:792px;top:88px;width:4px;height:1px;background:#6a9955;opacity:0.55"></div>
<div class="a" style="left:797px;top:88px;width:5px;height:1px;background:#6a9955;opacity:0.55"></div>
<div class="a" style="left:803px;top:88px;width:3px;height:1px;background:#6a9955;opacity:0.55"></div>
<div class="a" style="left:807px;top:88px;width:13px;height:1px;background:#6a9955;opacity:0.55"></div>
<div class="a" style="left:821px;top:88px;width:13px;height:1px;background:#6a9955;opacity:0.55"></div>
<div class="a" style="left:835px;top:88px;width:4px;height:1px;background:#6a9955;opacity:0.55"></div>
<div class="a" style="left:840px;top:88px;width:3px;height:1px;background:#6a9955;opacity:0.55"></div>
<div class="a" style="left:844px;top:88px;width:15px;height:1px;background:#6a9955;opacity:0.55"></div>
<div class="a" style="left:860px;top:88px;width:2px;height:1px;background:#6a9955;opacity:0.55"></div>
<div class="a" style="left:771px;top:90px;width:2px;height:1px;background:#6a9955;opacity:0.55"></div>
<div class="a" style="left:797px;top:90px;width:20px;height:1px;background:#6a9955;opacity:0.55"></div>
<div class="a" style="left:818px;top:90px;width:3px;height:1px;background:#6a9955;opacity:0.55"></div>
<div class="a" style="left:822px;top:90px;width:14px;height:1px;background:#6a9955;opacity:0.55"></div>
<div class="a" style="left:837px;top:90px;width:8px;height:1px;background:#6a9955;opacity:0.55"></div>
<div class="a" style="left:846px;top:90px;width:3px;height:1px;background:#6a9955;opacity:0.55"></div>
<div class="a" style="left:850px;top:90px;width:7px;height:1px;background:#6a9955;opacity:0.55"></div>
<div class="a" style="left:771px;top:92px;width:2px;height:1px;background:#6a9955;opacity:0.55"></div>
<div class="a" style="left:797px;top:92px;width:1px;height:1px;background:#6a9955;opacity:0.55"></div>
<div class="a" style="left:799px;top:92px;width:11px;height:1px;background:#6a9955;opacity:0.55"></div>
<div class="a" style="left:811px;top:92px;width:8px;height:1px;background:#6a9955;opacity:0.55"></div>
<div class="a" style="left:820px;top:92px;width:10px;height:1px;background:#6a9955;opacity:0.55"></div>
<div class="a" style="left:831px;top:92px;width:5px;height:1px;background:#6a9955;opacity:0.55"></div>
<div class="a" style="left:837px;top:92px;width:10px;height:1px;background:#6a9955;opacity:0.55"></div>
<div class="a" style="left:848px;top:92px;width:14px;height:1px;background:#6a9955;opacity:0.55"></div>
<div class="a" style="left:771px;top:94px;width:2px;height:1px;background:#6a9955;opacity:0.55"></div>
<div class="a" style="left:774px;top:94px;width:11px;height:1px;background:#6a9955;opacity:0.55"></div>
<div class="a" style="left:786px;top:94px;width:13px;height:1px;background:#6a9955;opacity:0.55"></div>
<div class="a" style="left:800px;top:94px;width:6px;height:1px;background:#6a9955;opacity:0.55"></div>
<div class="a" style="left:807px;top:94px;width:4px;height:1px;background:#6a9955;opacity:0.55"></div>
<div class="a" style="left:812px;top:94px;width:9px;height:1px;background:#6a9955;opacity:0.55"></div>
<div class="a" style="left:822px;top:94px;width:2px;height:1px;background:#6a9955;opacity:0.55"></div>
<div class="a" style="left:825px;top:94px;width:5px;height:1px;background:#6a9955;opacity:0.55"></div>
<div class="a" style="left:831px;top:94px;width:1px;height:1px;background:#6a9955;opacity:0.55"></div>
<div class="a" style="left:833px;top:94px;width:3px;height:1px;background:#6a9955;opacity:0.55"></div>
<div class="a" style="left:837px;top:94px;width:2px;height:1px;background:#6a9955;opacity:0.55"></div>
<div class="a" style="left:771px;top:96px;width:2px;height:1px;background:#6a9955;opacity:0.55"></div>
<div class="a" style="left:774px;top:96px;width:8px;height:1px;background:#6a9955;opacity:0.55"></div>
<div class="a" style="left:784px;top:96px;width:1px;height:1px;background:#6a9955;opacity:0.55"></div>
<div class="a" style="left:786px;top:96px;width:10px;height:1px;background:#6a9955;opacity:0.55"></div>
<div class="a" style="left:797px;top:96px;width:11px;height:1px;background:#6a9955;opacity:0.55"></div>
<div class="a" style="left:809px;top:96px;width:4px;height:1px;background:#6a9955;opacity:0.55"></div>
<div class="a" style="left:814px;top:96px;width:5px;height:1px;background:#6a9955;opacity:0.55"></div>
<div class="a" style="left:820px;top:96px;width:9px;height:1px;background:#6a9955;opacity:0.55"></div>
<div class="a" style="left:830px;top:96px;width:7px;height:1px;background:#6a9955;opacity:0.55"></div>
<div class="a" style="left:838px;top:96px;width:9px;height:1px;background:#6a9955;opacity:0.55"></div>
<div class="a" style="left:848px;top:96px;width:4px;height:1px;background:#6a9955;opacity:0.55"></div>
<div class="a" style="left:853px;top:96px;width:4px;height:1px;background:#6a9955;opacity:0.55"></div>
<div class="a" style="left:858px;top:96px;width:4px;height:1px;background:#6a9955;opacity:0.55"></div>
<div class="a" style="left:771px;top:98px;width:2px;height:1px;background:#6a9955;opacity:0.55"></div>
<div class="a" style="left:774px;top:98px;width:7px;height:1px;background:#6a9955;opacity:0.55"></div>
<div class="a" style="left:784px;top:98px;width:1px;height:1px;background:#6a9955;opacity:0.55"></div>
<div class="a" style="left:786px;top:98px;width:11px;height:1px;background:#6a9955;opacity:0.55"></div>
<div class="a" style="left:798px;top:98px;width:6px;height:1px;background:#6a9955;opacity:0.55"></div>
<div class="a" style="left:771px;top:102px;width:19px;height:1px;background:#dcdcaa;opacity:0.55"></div>
<div class="a" style="left:790px;top:102px;width:1px;height:1px;background:#ffd700;opacity:0.55"></div>
<div class="a" style="left:791px;top:102px;width:6px;height:1px;background:#d4d4d4;opacity:0.4"></div>
<div class="a" style="left:798px;top:102px;width:9px;height:1px;background:#d4d4d4;opacity:0.4"></div>
<div class="a" style="left:808px;top:102px;width:7px;height:1px;background:#d4d4d4;opacity:0.4"></div>
<div class="a" style="left:816px;top:102px;width:9px;height:1px;background:#d4d4d4;opacity:0.4"></div>
<div class="a" style="left:826px;top:102px;width:10px;height:1px;background:#d4d4d4;opacity:0.4"></div>
<div class="a" style="left:837px;top:102px;width:7px;height:1px;background:#d4d4d4;opacity:0.4"></div>
<div class="a" style="left:845px;top:102px;width:10px;height:1px;background:#d4d4d4;opacity:0.4"></div>
<div class="a" style="left:855px;top:102px;width:1px;height:1px;background:#ffd700;opacity:0.55"></div>
<div class="a" style="left:856px;top:102px;width:1px;height:1px;background:#d4d4d4;opacity:0.4"></div>
<div class="a" style="left:771px;top:106px;width:10px;height:1px;background:#d4d4d4;opacity:0.4"></div>
</div>
<div id="status" class="a">
<div class="a" style="left:0;top:0;width:205px;height:21px;background:#16825d"></div>
<div class="a" style="left:728px;top:0;width:452px;height:21px;background:#7f6600"></div>
<svg class="a" style="left:0;top:0" width="1202" height="21" viewBox="0 725 1202 21">
<g fill="none" stroke="#ffffff" stroke-width="1.2" stroke-linecap="round" stroke-linejoin="round">
<path d="M12.8 733.2 L17.3 737.3 L12.8 741.4 M21.4 729.6 L17.3 733.5 L21.4 737.4"/>
<circle cx="220.4" cy="735.9" r="5.6"/><path d="M218 733.5 L222.8 738.3 M222.8 733.5 L218 738.3"/>
<path d="M247.8 730.6 L253.3 740.6 H242.3 Z"/><path d="M247.8 734.2 V737.6"/>
<circle cx="274.2" cy="735.9" r="5.6"/><path d="M274.2 735 V739"/>
<path d="M311 732 Q309.3 735.3 311 738.6 M318.6 732 Q320.3 735.3 318.6 738.6 M312.8 733.6 Q312 735.3 312.8 737 M316.8 733.6 Q317.6 735.3 316.8 737"/>
<path d="M314.8 736.5 L311.8 741.3 M314.8 736.5 L317.8 741.3 M312.6 740 H317"/>
<path d="M348.3 738 C349 734.5 351.5 732.2 355.8 732.2 V729.9 L360.6 733.5 L355.8 737.2 V734.9 C352.5 734.9 350 736 348.3 738 Z"/>
<circle cx="353" cy="740.1" r="2.1"/>
<path d="M446.9 730 C442.5 730.3 439 733 436.2 737.6 L439.6 741 C444 738.2 446.6 734.5 446.9 730 Z"/><path d="M438.6 733.3 H435.3 V736.8 M443.3 738.2 V741.4 H439.9 M435.3 739.6 V741.9 H437.4"/>
<rect x="742.5" y="732.5" width="5.6" height="3.6" rx="1.2" transform="rotate(-45 745.3 734.3)"/><rect x="737.9" y="736.8" width="5.6" height="3.6" rx="1.4" transform="rotate(-45 740.7 738.6)"/><path d="M737.6 741.6 L739 740.2 M747.4 732.2 L748.8 730.8"/>
</g>
<circle cx="247.8" cy="738.9" r="0.6" fill="#ffffff"/>
<circle cx="274.2" cy="733" r="0.7" fill="#ffffff"/>
<circle cx="314.8" cy="735.3" r="1.1" fill="#ffffff"/><circle cx="442.2" cy="734.7" r="1.1" fill="#ffffff"/>
</svg>
<div class="st" style="left:28px;letter-spacing:-0.5px">KUNDENMATCHCODE@kundea</div>
<div class="st" style="left:231px;letter-spacing:0px">0</div>
<div class="st" style="left:258px;letter-spacing:0px">0</div>
<div class="st" style="left:285px;letter-spacing:0px">1</div>
<div class="st" style="left:325px;letter-spacing:0px">0</div>
<div class="st" style="left:365px;letter-spacing:-0.4px">Live Share</div>
<div class="st" style="left:452px;letter-spacing:-0.05px">codeblock language server running on port: 53016</div>
<div class="st" style="left:754px;letter-spacing:-0.2px">Verbindung hergestellt (bePortal und beas): KUNDENMATCHCODE -&gt; KUNDEA</div>
</div>
<svg class="a" style="left:0;top:0" width="1202" height="746" viewBox="0 0 1202 746"><defs><filter id="bl" x="-10%" y="-10%" width="120%" height="120%"><feGaussianBlur stdDeviation="1.4"/></filter></defs><g filter="url(#bl)" transform="translate(3,3.5)" opacity="0.9"><path d="M316.4 241.5 L535.7 68.7" stroke="#5a5a5a" stroke-width="6" fill="none"/><path d="M543.6 62.5 L537.0 73.5 L531.3 66.3 Z" fill="#5a5a5a" stroke="#5a5a5a" stroke-width="3" stroke-linejoin="round"/><path d="M289.8 276.0 L281.8 330.4" stroke="#5a5a5a" stroke-width="6" fill="none"/><path d="M280.3 340.3 L277.5 327.8 L286.6 329.1 Z" fill="#5a5a5a" stroke="#5a5a5a" stroke-width="3" stroke-linejoin="round"/><path d="M388.4 311.6 L564.8 73.8" stroke="#5a5a5a" stroke-width="6" fill="none"/><path d="M570.8 65.8 L567.3 78.2 L560.0 72.7 Z" fill="#5a5a5a" stroke="#5a5a5a" stroke-width="3" stroke-linejoin="round"/><path d="M355.4 333.3 L326.3 344.7" stroke="#5a5a5a" stroke-width="6" fill="none"/><path d="M317.0 348.4 L326.5 339.7 L329.9 348.3 Z" fill="#5a5a5a" stroke="#5a5a5a" stroke-width="3" stroke-linejoin="round"/></g><g><path d="M316.4 241.5 L535.7 68.7" stroke="#ff0000" stroke-width="2.4" fill="none"/><path d="M543.6 62.5 L537.0 73.5 L531.3 66.3 Z" fill="#ff0000"/><path d="M289.8 276.0 L281.8 330.4" stroke="#ff0000" stroke-width="2.4" fill="none"/><path d="M280.3 340.3 L277.5 327.8 L286.6 329.1 Z" fill="#ff0000"/><path d="M388.4 311.6 L564.8 73.8" stroke="#ff0000" stroke-width="2.4" fill="none"/><path d="M570.8 65.8 L567.3 78.2 L560.0 72.7 Z" fill="#ff0000"/><path d="M355.4 333.3 L326.3 344.7" stroke="#ff0000" stroke-width="2.4" fill="none"/><path d="M317.0 348.4 L326.5 339.7 L329.9 348.3 Z" fill="#ff0000"/></g><g fill="#8b0000"><circle cx="300.7" cy="253.5" r="15"/><circle cx="372.6" cy="323.5" r="15"/><circle cx="1125.5" cy="75.5" r="15"/></g><g fill="#ffffff" font-family="Liberation Sans" font-size="16.5" text-anchor="middle"><path d="M300 247.1 H301.8 V259.2 H300 V249.6 Q298.6 250.9 296.8 251.4 V249.6 Q299 248.6 300 247.1 Z"/><text x="372.6" y="328.8">2</text><text x="1125.3" y="81">3</text></g></svg>
<svg class="a" style="left:0;top:0" width="1202" height="746" viewBox="0 0 1202 746"><g fill="#1b1e23"><path d="M0 0 H8 A8 8 0 0 0 0 8 Z"/><path d="M1202 0 H1194 A8 8 0 0 1 1202 8 Z"/><path d="M0 746 H8 A8 8 0 0 1 0 738 Z"/><path d="M1202 746 H1194 A8 8 0 0 0 1202 738 Z"/></g><path d="M8 0.5 H1194" stroke="#474747" stroke-width="1"/></svg>
</body></html>
